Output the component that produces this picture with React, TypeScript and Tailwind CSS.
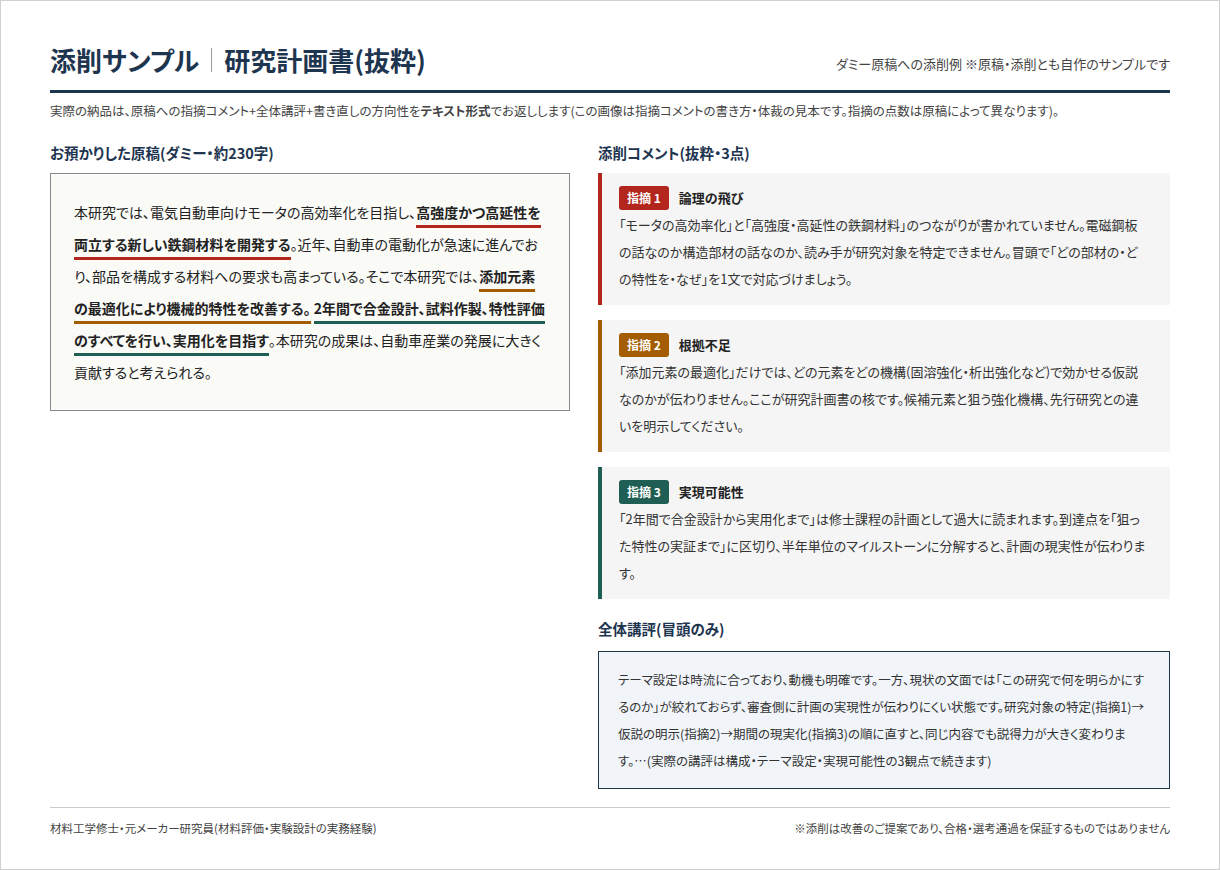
const font = { fontFamily: '"Noto Sans CJK JP", "Noto Sans", sans-serif', fontFeatureSettings: '"palt"' };

type Point = { n: number; title: string; color: string; body: string };

const points: Point[] = [
  {
    n: 1,
    title: "論理の飛び",
    color: "#b3261e",
    body: "「モータの高効率化」と「高強度・高延性の鉄鋼材料」のつながりが書かれていません。電磁鋼板の話なのか構造部材の話なのか、読み手が研究対象を特定できません。冒頭で「どの部材の・どの特性を・なぜ」を1文で対応づけましょう。",
  },
  {
    n: 2,
    title: "根拠不足",
    color: "#a35c00",
    body: "「添加元素の最適化」だけでは、どの元素をどの機構(固溶強化・析出強化など)で効かせる仮説なのかが伝わりません。ここが研究計画書の核です。候補元素と狙う強化機構、先行研究との違いを明示してください。",
  },
  {
    n: 3,
    title: "実現可能性",
    color: "#1f5e54",
    body: "「2年間で合金設計から実用化まで」は修士課程の計画として過大に読まれます。到達点を「狙った特性の実証まで」に区切り、半年単位のマイルストーンに分解すると、計画の現実性が伝わります。",
  },
];

const Mark = ({ c, children }: { c: string; children: React.ReactNode }) => (
  <span className="font-bold border-b-[3px] pb-[3px]" style={{ borderColor: c }}>
    {children}
  </span>
);

export default function App() {
  return (
    <div className="w-[1220px] h-[870px] bg-white border border-[#d0d0d0] text-[#222]" style={font}>
      <div className="px-[49px] pt-[40px]">
        <div className="flex items-end justify-between pb-[11px] border-b-[3px] border-[#1e3550]">
          <h1 className="text-[26px] font-bold text-[#1e3550] leading-[38px] flex items-center">
            添削サンプル
            <span className="mx-[12px] w-px h-[24px] bg-[#999]" />
            研究計画書(抜粋)
          </h1>
          <div className="text-[13px] text-[#444] pb-[6px]">ダミー原稿への添削例 ※原稿・添削とも自作のサンプルです</div>
        </div>
        <p className="text-[12.5px] text-[#444] mt-[8px] leading-[20px]">
          実際の納品は、原稿への指摘コメント+全体講評+書き直しの方向性を<span className="font-bold">テキスト形式</span>でお返しします(この画像は指摘コメントの書き方・体裁の見本です。指摘の点数は原稿によって異なります)。
        </p>
        <div className="flex gap-[28px] mt-[20px] h-[666px]">
          <div className="w-[520px]">
            <h2 className="text-[14.5px] font-bold text-[#1e3550] leading-[24px]">お預かりした原稿(ダミー・約230字)</h2>
            <div className="mt-[8px] border border-[#888] bg-[#fafaf7] px-[23px] py-[22px] text-[14px] leading-[32px]">
              本研究では、電気自動車向けモータの高効率化を目指し、<Mark c="#b3261e">高強度かつ高延性を両立する新しい鉄鋼材料を開発する</Mark>。近年、自動車の電動化が急速に進んでおり、部品を構成する材料への要求も高まっている。そこで本研究では、<Mark c="#a35c00">添加元素の最適化により機械的特性を改善する。</Mark> <Mark c="#1f5e54">2年間で合金設計、試料作製、特性評価のすべてを行い、実用化を目指す</Mark>。本研究の成果は、自動車産業の発展に大きく貢献すると考えられる。
            </div>
          </div>
          <div className="flex-1 flex flex-col">
            <h2 className="text-[14.5px] font-bold text-[#1e3550] leading-[24px]">添削コメント(抜粋・3点)</h2>
            <div className="mt-[8px] flex flex-col gap-[15px]">
              {points.map((p) => (
                <div key={p.n} className="bg-[#f5f5f5] border-l-4 pl-[17px] pr-[22px] pt-[13px] pb-[13px]" style={{ borderColor: p.color }}>
                  <div className="flex items-center gap-[10px]">
                    <span className="text-white text-[12px] font-bold px-[8px] h-[24px] leading-[24px] rounded-[3px]" style={{ background: p.color }}>
                      指摘 {p.n}
                    </span>
                    <span className="text-[13px] font-bold">{p.title}</span>
                  </div>
                  <p className="text-[13px] leading-[27px] mt-[1px] text-[#333]">{p.body}</p>
                </div>
              ))}
            </div>
            <h2 className="text-[14.5px] font-bold text-[#1e3550] leading-[24px] mt-[18px]">全体講評(冒頭のみ)</h2>
            <div className="mt-[10px] border border-[#1e3550] bg-[#f1f5fa] px-[19px] py-[14px] text-[12.5px] leading-[27px] text-[#333]">
              テーマ設定は時流に合っており、動機も明確です。一方、現状の文面では「この研究で何を明らかにするのか」が絞れておらず、審査側に計画の実現性が伝わりにくい状態です。研究対象の特定(指摘1)→仮説の明示(指摘2)→期間の現実化(指摘3)の順に直すと、同じ内容でも説得力が大きく変わります。…(実際の講評は構成・テーマ設定・実現可能性の3観点で続きます)
            </div>
          </div>
        </div>
        <div className="border-t border-[#ccc] pt-[12px] flex justify-between text-[11.5px] text-[#444]">
          <span>材料工学修士・元メーカー研究員(材料評価・実験設計の実務経験)</span>
          <span>※添削は改善のご提案であり、合格・選考通過を保証するものではありません</span>
        </div>
      </div>
    </div>
  );
}
